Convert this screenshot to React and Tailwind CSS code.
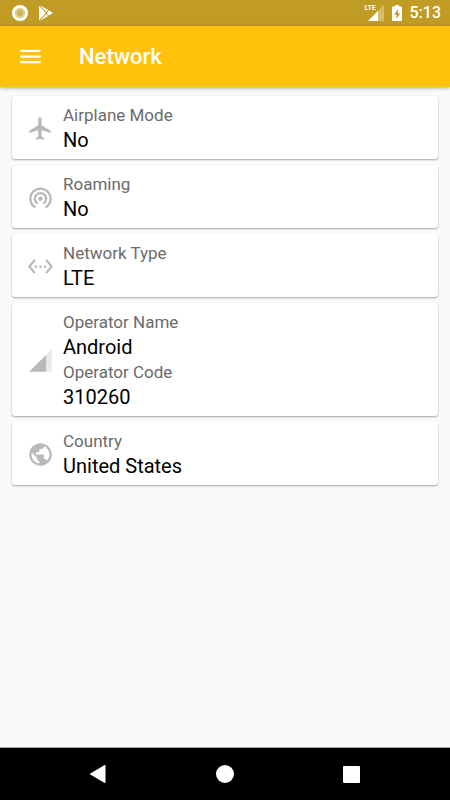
import { useState } from 'react';

const icons = {
    airplane: (
        <path d="M21 16v-2l-8-5V3.5c0-.83-.67-1.5-1.5-1.5S10 2.67 10 3.5V9l-8 5v2l8-2.5V19l-2 1.5V22l3.5-1 3.5 1v-1.5L13 19v-5.5l8 2.5z" />
    ),
    roaming: (
        <path d="M12 11c-1.1 0-2 .9-2 2s.9 2 2 2 2-.9 2-2-.9-2-2-2zm6 2c0-3.31-2.69-6-6-6s-6 2.69-6 6c0 2.22 1.21 4.15 3 5.19l1-1.74c-1.19-.7-2-1.97-2-3.45 0-2.21 1.79-4 4-4s4 1.79 4 4c0 1.48-.81 2.75-2 3.45l1 1.74c1.79-1.04 3-2.97 3-5.19zM12 3C6.48 3 2 7.48 2 13c0 3.7 2.01 6.92 4.99 8.65l1-1.73C5.61 18.53 4 15.96 4 13c0-4.42 3.58-8 8-8s8 3.58 8 8c0 2.96-1.61 5.53-4 6.92l1 1.73c2.99-1.73 5-4.95 5-8.65 0-5.52-4.48-10-10-10z" />
    ),
    ethernet: (
        <path d="M7.77 6.76L6.23 5.48.82 12l5.41 6.52 1.54-1.28L3.42 12l4.35-5.24zM7 13h2v-2H7v2zm10-2h-2v2h2v-2zm-6 2h2v-2h-2v2zm6.77-7.52l-1.54 1.28L20.58 12l-4.35 5.24 1.54 1.28L23.18 12l-5.41-6.52z" />
    ),
    signal: (
        <>
            <path fillOpacity=".3" d="M2 22h20V2z" />
            <path d="M17 7L2 22h15z" />
        </>
    ),
    globe: (
        <path d="M12 2C6.48 2 2 6.48 2 12s4.48 10 10 10 10-4.48 10-10S17.52 2 12 2zm-1 17.93c-3.95-.49-7-3.85-7-7.93 0-.62.08-1.21.21-1.79L9 15v1c0 1.1.9 2 2 2v1.93zm6.9-2.54c-.26-.81-1-1.39-1.9-1.39h-1v-3c0-.55-.45-1-1-1H8v-2h2c.55 0 1-.45 1-1V7h2c1.1 0 2-.9 2-2v-.41c2.93 1.19 5 4.06 5 7.41 0 2.08-.8 3.97-2.1 5.39z" />
    ),
};

const cards = [
    { icon: 'airplane', rows: [['Airplane Mode', 'No']] },
    { icon: 'roaming', rows: [['Roaming', 'No']] },
    { icon: 'ethernet', rows: [['Network Type', 'LTE']] },
    { icon: 'signal', rows: [['Operator Name', 'Android'], ['Operator Code', '310260']] },
    { icon: 'globe', rows: [['Country', 'United States']] },
];

const StatusBar = () => (
    <div className="flex h-[26px] items-center justify-between bg-[#c19c24] pl-3 pr-[9px] text-white">
        <div className="flex items-center gap-[10px]">
            <svg viewBox="0 0 16 16" className="size-4">
                <circle cx="8" cy="8" r="8" fill="#fff" />
                <circle cx="8" cy="8" r="5.2" fill="#dfcc8e" />
                <circle cx="8" cy="8" r="3" fill="#cfb35a" />
            </svg>
            <svg viewBox="0 0 16 16" className="size-4" fill="#fff">
                <path d="M1 .8v14.4L7.8 8z" />
                <path d="M1.8.2l8.4 4.9-1.8 2z" />
                <path d="M1.8 15.8l8.4-4.9-1.8-2z" />
                <path d="M11 5.6l3.7 2.1v.6L11 10.4 8.9 8z" />
            </svg>
        </div>
        <div className="flex items-center gap-2">
            <div className="relative">
                <svg viewBox="0 0 16 16" className="size-4" fill="#fff">
                    <path fillOpacity=".35" d="M8.5 7.5L16 0v16H0l8.5-8.5z" />
                    <path d="M10 6v10H0z" />
                </svg>
                <span className="absolute -left-[3px] top-0 bg-[#c19c24] text-[7px] font-bold leading-[7px]">LTE</span>
            </div>
            <svg viewBox="0 0 10 16" className="h-4 w-[10px]">
                <path fill="#fff" d="M1 1.6h2V0h4v1.6h2c.6 0 1 .4 1 1V15c0 .6-.4 1-1 1H1c-.6 0-1-.4-1-1V2.6c0-.6.4-1 1-1z" />
                <path fill="#c19c24" d="M6 4L2.2 9.6h2.2V14L8 8.2H6z" />
            </svg>
            <span className="text-base leading-[26px] font-medium">5:13</span>
        </div>
    </div>
);

const InfoCard = ({ icon, rows }) => (
    <section className="flex items-center gap-[9px] rounded-[3px] bg-white pt-[7px] pb-[6px] pl-[15px] pr-3 shadow-[0_1px_2px_rgba(0,0,0,0.35)]">
        <svg viewBox="0 0 24 24" className="size-[27px] shrink-0" fill="#b9b9b9">
            {icons[icon]}
        </svg>
        <dl className="min-w-0 flex-1">
            {rows.map(([label, value]) => (
                <div key={label}>
                    <dt className="text-[17px] leading-[25px] text-[#6b6b6b]">{label}</dt>
                    <dd className="text-[20px] leading-[25px] text-black">{value}</dd>
                </div>
            ))}
        </dl>
    </section>
);

const NavBar = () => (
    <nav className="flex h-[53px] border-t border-[#a0a0a0] bg-black px-[35px]">
        <button aria-label="Back" className="flex flex-1 items-center justify-center">
            <svg viewBox="0 0 18 18" className="size-[18px]" fill="#fff">
                <path d="M16.5.4v17.2c0 .3-.4.5-.8.3L1.3 9.5c-.4-.3-.4-.7 0-1L15.7.1c.4-.2.8 0 .8.3z" />
            </svg>
        </button>
        <button aria-label="Home" className="flex flex-1 items-center justify-center">
            <span className="size-[18px] rounded-full bg-white" />
        </button>
        <button aria-label="Recents" className="flex flex-1 items-center justify-center">
            <span className="size-[17px] rounded-[1px] bg-white" />
        </button>
    </nav>
);

const App = () => {
    const [menuOpen, setMenuOpen] = useState(false);

    return (
        <div className="flex min-h-screen flex-col bg-[#fafafa] font-['Roboto',sans-serif]">
            <StatusBar />
            <header className="flex h-[61px] items-center gap-[35px] bg-[#ffc10a] pl-[17px] text-white shadow-[0_1px_4px_rgba(0,0,0,0.35)]">
                <button aria-label="Menu" aria-expanded={menuOpen} onClick={() => setMenuOpen(!menuOpen)}>
                    <svg viewBox="0 0 24 24" className="size-[27px]" fill="currentColor">
                        <path d="M3 18h18v-2H3v2zm0-5h18v-2H3v2zm0-7v2h18V6H3z" />
                    </svg>
                </button>
                <h1 className="text-[22px] font-medium leading-[30px]">Network</h1>
            </header>
            <main className="flex flex-1 flex-col gap-[6px] px-3 py-[9px]">
                {cards.map(card => (
                    <InfoCard key={card.icon} {...card} />
                ))}
            </main>
            <NavBar />
        </div>
    );
};

export default App;
